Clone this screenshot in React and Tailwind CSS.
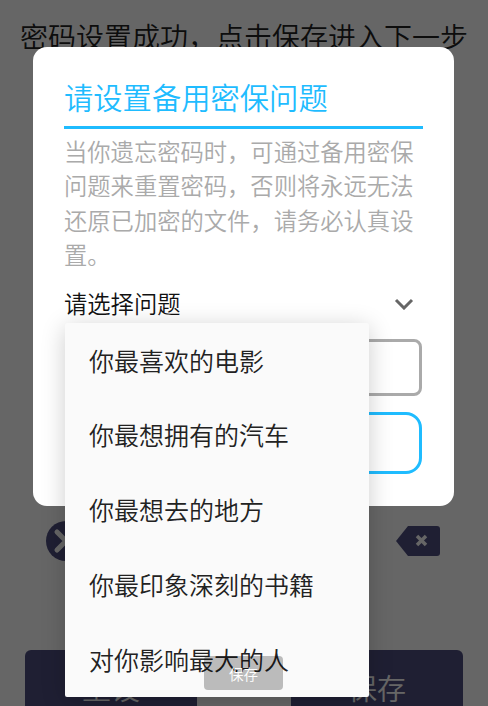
import React from "react";

const items = ["你最喜欢的电影", "你最想拥有的汽车", "你最想去的地方", "你最印象深刻的书籍", "对你影响最大的人"];

export default function App() {
  return (
    <div className="relative w-[488px] h-[706px] overflow-hidden bg-white font-['Noto_Sans_CJK_SC',sans-serif]">
      {/* page beneath */}
      <div className="flex flex-col h-full">
        <div className="pt-[18px] text-center text-[28px] leading-[36px] font-[350] text-[#222]">密码设置成功，点击保存进入下一步</div>
        <div className="flex justify-between items-center mt-[467px] pl-[46px] pr-[48px]">
          <svg width="40" height="40" viewBox="0 0 40 40">
            <circle cx="20" cy="20" r="20" fill="#4f4f80" />
            <path d="M11 11l18 18M29 11L11 29" stroke="#fff" strokeWidth="5" strokeLinecap="round" />
          </svg>
          <svg width="44" height="30" viewBox="0 0 44 30">
            <path d="M12 0H41a3 3 0 0 1 3 3V27a3 3 0 0 1-3 3H12L0 15Z" fill="#4f4f80" />
            <path d="M21 10l9 9M30 10l-9 9" stroke="#fff" strokeWidth="3.5" />
          </svg>
        </div>
        <div className="flex justify-between mt-[89px] px-[25px]">
          <div className="w-[172px] h-[56px] overflow-hidden rounded-t-[6px] bg-[#4f4f80] text-center text-white font-[350] text-[29px] leading-[74px]">重设</div>
          <div className="w-[172px] h-[56px] overflow-hidden rounded-t-[6px] bg-[#4f4f80] text-center text-white font-[350] text-[29px] leading-[74px]">保存</div>
        </div>
      </div>
      {/* scrim */}
      <div className="absolute inset-0 bg-black/60" />
      {/* dialog */}
      <div className="absolute left-[33px] top-[47px] w-[421px] h-[459px] rounded-[14px] bg-white pl-[31px] pr-[32px] pt-[28px]">
        <div className="text-[29.3px] leading-[42px] font-[350] text-[#1fbcff]">请设置备用密保问题</div>
        <div className="h-[3px] mt-[9px] -mr-[1px] bg-[#1fbcff]" />
        <div className="mt-[5px] text-[23.3px] leading-[34.4px] font-[350] text-[#aaaaaa]">当你遗忘密码时，可通过备用密保问题来重置密码，否则将永远无法还原已加密的文件，请务必认真设置。</div>
        <div className="flex items-center justify-between mt-[12px] h-[40px]">
          <span className="text-[23.3px] font-[350] text-[#111]">请选择问题</span>
          <svg className="mr-[8px]" width="20" height="12" viewBox="0 0 20 12"><path d="M2 2l8 8 8-8" fill="none" stroke="#666" strokeWidth="3" /></svg>
        </div>
        <div className="mt-[15px] ml-[1px] h-[57px] rounded-[8px] border-[3px] border-[#aaaaaa]" />
        <div className="mt-[16px] ml-[1px] h-[62px] rounded-[16px] border-[3px] border-[#1fbcff]" />
      </div>
      {/* dropdown */}
      <div className="absolute left-[65px] top-[323px] w-[304px] h-[374px] rounded-[2px] bg-[#fafafa] shadow-[0_4px_24px_rgba(0,0,0,0.2)] flex flex-col">
        {items.map((t) => (
          <div key={t} className="h-[74.8px] pl-[24px] flex items-center text-[25px] font-[350] text-[#222]">{t}</div>
        ))}
      </div>
      {/* toast */}
      <div className="absolute left-[204px] top-[656px] w-[79px] h-[34px] rounded-[4px] bg-black/25 text-center text-[14.5px] leading-[36px] font-[350] text-white">保存</div>
    </div>
  );
}
